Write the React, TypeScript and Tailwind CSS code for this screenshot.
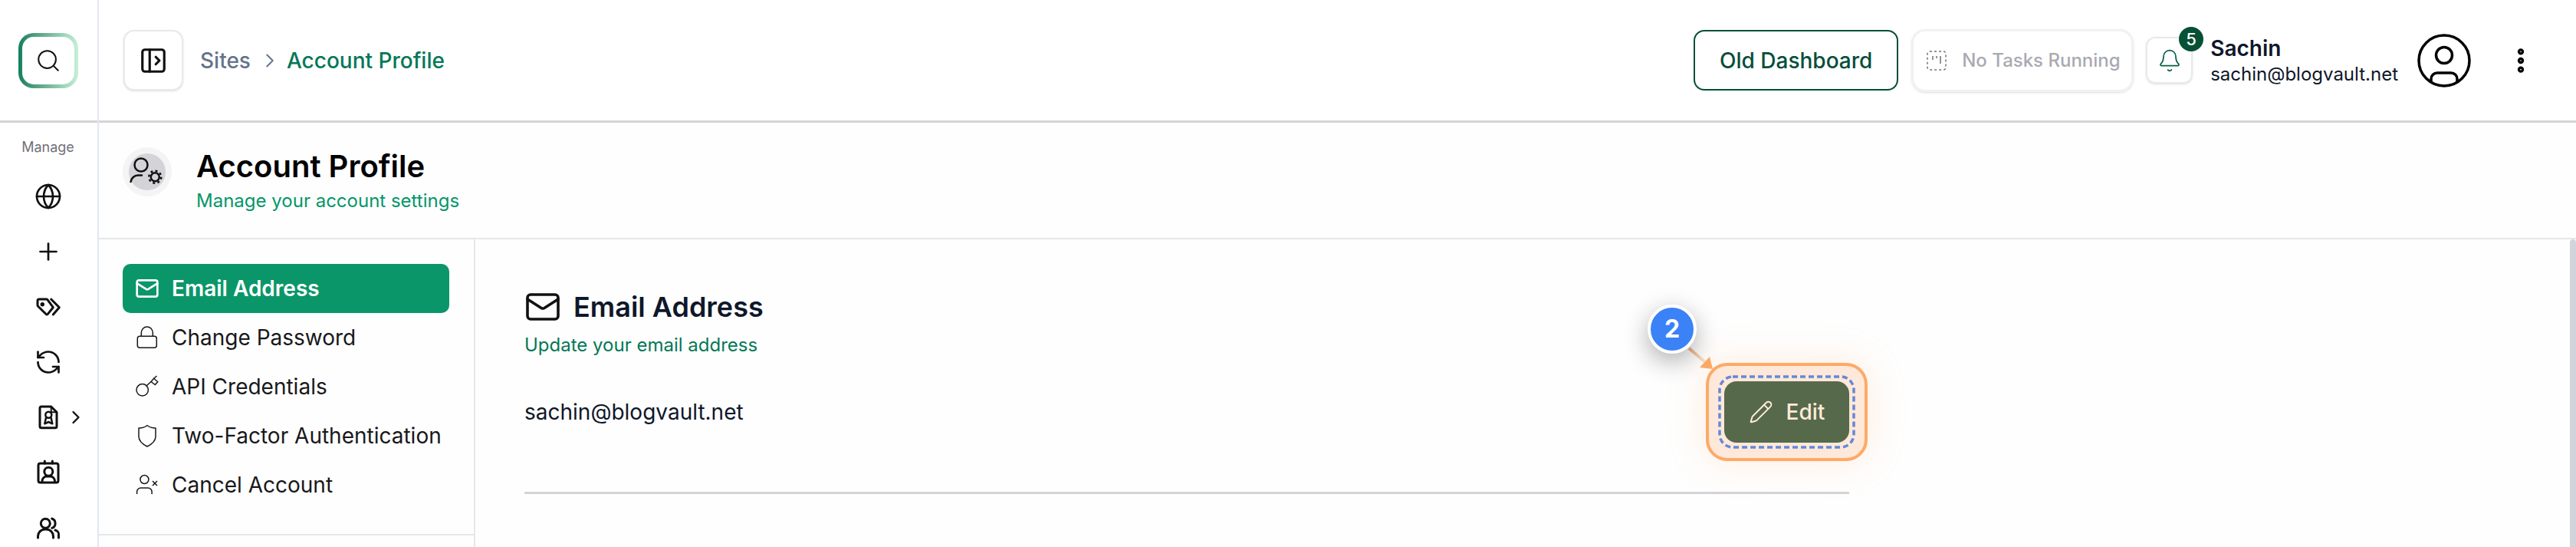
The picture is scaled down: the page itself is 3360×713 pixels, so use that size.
import React from 'react';
import {
  Search,
  PanelLeftOpen,
  ChevronRight,
  Globe,
  Plus,
  RefreshCcw,
  Bell,
  Pencil,
  Mail,
  MoreVertical,
} from 'lucide-react';

const font = { fontFamily: 'Inter, "Liberation Sans", sans-serif' };

type IconProps = { size?: number; strokeWidth?: number };

const LockIcon = ({ size = 32, strokeWidth = 1.5 }: IconProps) => (
  <svg width={size} height={size} viewBox="0 0 32 32" fill="none" stroke="currentColor" strokeWidth={strokeWidth}>
    <rect x="3.300" y="14.300" width="25" height="15" rx="3" />
    <path d="M8.300 14.300V9.500a7.500 7.500 0 0 1 15 0v4.800" />
  </svg>
);

const KeyIcon = ({ size = 32, strokeWidth = 1.5 }: IconProps) => (
  <svg width={size} height={size} viewBox="0 0 32 32" fill="none" stroke="currentColor" strokeWidth={strokeWidth}>
    <circle cx="9.700" cy="20.300" r="7.700" />
    <path d="M15.200 14.800 21 9.500" />
    <path d="M21 9.500 24.700 5.300 29.700 9.700 26.300 13.500z" />
    <path d="M24.700 5.300 28.500 2" />
  </svg>
);

const ShieldIcon = ({ size = 32, strokeWidth = 1.5 }: IconProps) => (
  <svg width={size} height={size} viewBox="0 0 32 32" fill="none" stroke="currentColor" strokeWidth={strokeWidth} strokeLinejoin="round">
    <path d="M16 2.500C13 5 9 6 5 6v11c0 6 5 10 11 13 6-3 11-7 11-13V6c-4 0-8-1-11-3.500z" />
  </svg>
);

const UserXIcon = ({ size = 32, strokeWidth = 1.5 }: IconProps) => (
  <svg width={size} height={size} viewBox="0 0 32 32" fill="none" stroke="currentColor" strokeWidth={strokeWidth}>
    <circle cx="12.400" cy="9" r="5.500" />
    <path d="M2.600 28v-3a5 5 0 0 1 5-5h9.500a5 5 0 0 1 5 5v3" />
    <path d="m23 11 6 6M29 11l-6 6" />
  </svg>
);

const navItems = [
  { label: 'Email Address', icon: Mail, active: true },
  { label: 'Change Password', icon: LockIcon },
  { label: 'API Credentials', icon: KeyIcon },
  { label: 'Two-Factor Authentication', icon: ShieldIcon },
  { label: 'Cancel Account', icon: UserXIcon },
];

const TagsIcon = () => (
  <svg width="36" height="36" viewBox="0 0 36 36" fill="none" stroke="#111" strokeWidth="3" strokeLinejoin="round" strokeLinecap="round">
    <path d="M4 10a2 2 0 0 1 2-2h9.500a2 2 0 0 1 1.600.8l7.200 9.900-7 8.700a1.500 1.500 0 0 1-2.200.1L4.600 17.200a2 2 0 0 1-.6-1.400z" />
    <circle cx="10.300" cy="14.700" r="1.200" fill="#111" />
    <path d="m21.700 8 10.600 10.700L24.300 28" />
  </svg>
);

const DocBadgeIcon = () => (
  <svg width="36" height="36" viewBox="0 0 36 36" fill="none" stroke="#111" strokeWidth="3" strokeLinejoin="round" strokeLinecap="round">
    <path d="M7 6a2 2 0 0 1 2-2h12.700L29 11.300V29.700a2 2 0 0 1-2 2H9a2 2 0 0 1-2-2z" />
    <path d="M21.700 4v7.300H29" strokeWidth="2" />
    <circle cx="18.300" cy="14.700" r="4" strokeWidth="2.500" />
    <path d="M15 18.500l-1.700 7.800 5-2.300 5 2.300-1.700-7.800" strokeWidth="2.500" />
  </svg>
);

const ContactIcon = () => (
  <svg width="36" height="36" viewBox="0 0 36 36" fill="none" stroke="#111" strokeWidth="3" strokeLinejoin="round" strokeLinecap="round">
    <rect x="5" y="6" width="26" height="25" rx="2.500" />
    <path d="M13.300 3v3M23.300 3v3" />
    <circle cx="18.300" cy="16.700" r="5.500" />
    <path d="M10 30v-1a6 6 0 0 1 6-6h4.500a6 6 0 0 1 6 6v1" />
  </svg>
);

const UsersIcon = () => (
  <svg width="36" height="36" viewBox="0 0 36 36" fill="none" stroke="#111" strokeWidth="3" strokeLinecap="round">
    <circle cx="14.300" cy="12.300" r="6" />
    <path d="M22.700 6a6.500 6.500 0 0 1 0 12.300" />
    <path d="M4.500 31v-2a9 9 0 0 1 9-9h2a9 9 0 0 1 9 9v2" />
    <path d="M27 21a6 6 0 0 1 4.500 7v3" />
  </svg>
);

const UserGearIcon = () => (
  <svg width="48" height="48" viewBox="0 0 48 48" fill="none" stroke="#111" strokeWidth="2.500" strokeLinecap="round">
    <circle cx="16" cy="15" r="8.500" />
    <path d="M2.500 37a10 10 0 0 1 9.500-8.500h5" />
    <circle cx="34.300" cy="30.700" r="5.500" />
    <circle cx="34.300" cy="30.700" r="8" strokeLinecap="butt" strokeDasharray="3 3.280" />
  </svg>
);

const TasksIcon = () => (
  <svg width="26" height="26" viewBox="0 0 26 26" fill="none" stroke="#71717a">
    <rect x="1" y="1" width="24" height="24" rx="3" strokeWidth="1.500" strokeDasharray="3 3" />
    <path d="M8 7v5M13 7v3M18 7v10" strokeWidth="1.500" />
  </svg>
);

const AvatarIcon = () => (
  <svg width="70" height="70" viewBox="0 0 70 70" fill="none" stroke="#000" strokeWidth="3.500">
    <circle cx="35" cy="35" r="33" />
    <circle cx="35" cy="28" r="10.500" />
    <path d="M18 62v-3a8 8 0 0 1 8-8h18a8 8 0 0 1 8 8v3" />
  </svg>
);

const Sidebar = () => (
  <aside className="flex w-[129px] shrink-0 flex-col border-r-2 border-[#e2e8f0] bg-white">
    <div className="flex h-[160px] shrink-0 items-start border-b-[3px] border-[#d4d4d8] pl-[24px] pt-[43px]">
      <div className="h-[72px] w-[78px] rounded-[20px] bg-gradient-to-r from-[#0f7f5f] to-[#c6f0d8] p-[5px]">
        <div className="flex h-full w-full items-center justify-center rounded-[15px] bg-white">
          <Search size={34} strokeWidth={1.400} color="#111" />
        </div>
      </div>
    </div>
    <div className="flex flex-col items-center pr-[2px] pt-[20px]">
      <span className="text-[18px] leading-6 text-[#71717a]">Manage</span>
      <div className="mt-[34px] flex h-[36px] items-center"><Globe size={36} strokeWidth={1.800} color="#111" /></div>
      <div className="mt-[36px] flex h-[36px] items-center"><Plus size={36} strokeWidth={1.800} color="#111" /></div>
      <div className="mt-[36px] flex h-[36px] items-center"><TagsIcon /></div>
      <div className="mt-[36px] flex h-[36px] items-center"><RefreshCcw size={36} strokeWidth={1.800} color="#111" /></div>
      <div className="relative mt-[36px] flex h-[36px] items-center">
        <DocBadgeIcon />
        <ChevronRight size={28} strokeWidth={2} color="#111" className="absolute left-[40px] top-[4px]" />
      </div>
      <div className="mt-[36px] flex h-[36px] items-center"><ContactIcon /></div>
      <div className="mt-[36px] flex h-[36px] items-center"><UsersIcon /></div>
    </div>
  </aside>
);

const Header = () => (
  <header className="flex h-[160px] shrink-0 items-center border-b-[3px] border-[#d4d4d8] bg-white pl-[32px] pr-[52px]">
    <button className="flex h-[79px] w-[78px] items-center justify-center rounded-[14px] border-2 border-[#e9e9eb] bg-white shadow-sm">
      <PanelLeftOpen size={38} strokeWidth={2} color="#111" />
    </button>
    <span className="ml-[22px] text-[28px] font-medium text-[#64748b]">Sites</span>
    <ChevronRight size={30} strokeWidth={1.500} color="#64748b" className="ml-[10px] mr-[7px]" />
    <span className="text-[28px] font-medium text-[#047857]">Account Profile</span>

    <div className="ml-auto flex items-center">
      <button className="flex h-[79px] w-[267px] items-center justify-center rounded-[14px] border-2 border-[#064e3b] text-[28px] font-medium text-[#064e3b]">
        Old Dashboard
      </button>
      <div className="ml-[17px] flex h-[82px] w-[290px] items-center gap-[20px] rounded-[18px] border-[3px] border-[#f1f1f3] pl-[17px] shadow-sm">
        <TasksIcon />
        <span className="text-[24px] font-medium text-[#a9aab2]">No Tasks Running</span>
      </div>
      <div className="relative ml-[16px] flex h-[61px] w-[61px] items-center justify-center rounded-[12px] border-2 border-[#e9e9eb] shadow-sm">
        <Bell size={32} strokeWidth={1.300} color="#065f46" />
        <span className="absolute left-[41px] top-[-15px] flex h-[32px] w-[32px] items-center justify-center rounded-full bg-[#065035] text-[22px] font-medium text-white">
          5
        </span>
      </div>
      <div className="ml-[23px] flex flex-col">
        <span className="text-[28px] font-semibold leading-[36px] text-[#0f172a]">Sachin</span>
        <span className="text-[24px] leading-[32px] text-[#0f172a]">sachin@blogvault.net</span>
      </div>
      <div className="ml-[25px]"><AvatarIcon /></div>
      <MoreVertical size={40} strokeWidth={3} color="#000" className="ml-[45px]" />
    </div>
  </header>
);

const EditButton = () => (
  <div className="relative">
    <div className="absolute -inset-6 rounded-[28px] border-4 border-[#fdaa66] bg-[#fde8da] shadow-[0_0_50px_rgba(253,170,102,0.22)]" />
    <svg className="absolute left-[-8px] top-[-8px]" width="179" height="96" fill="none">
      <rect x="2" y="2" width="175" height="92" rx="17" stroke="#6488d8" strokeWidth="3.500" strokeDasharray="7 4" />
    </svg>
    <button className="relative flex h-[80px] w-[163px] items-center justify-center gap-[17px] rounded-[16px] bg-[#57694b] text-[28px] font-medium text-[#fdebd9]">
      <Pencil size={32} strokeWidth={1.500} />
      Edit
    </button>
    <svg className="absolute left-[-49px] top-[-47px]" width="40" height="35" viewBox="0 0 40 35" fill="none">
      <defs>
        <linearGradient id="arrowLine" x1="3" y1="4" x2="24" y2="22" gradientUnits="userSpaceOnUse">
          <stop offset="0" stopColor="#eeb184" />
          <stop offset="1" stopColor="#fbe3d0" />
        </linearGradient>
      </defs>
      <path d="M3 4 24 22" stroke="url(#arrowLine)" strokeWidth="4" />
      <path d="M17 29 30 15l4 16z" fill="#fdaa66" />
    </svg>
    <span className="absolute left-[-100px] top-[-100px] flex h-[64px] w-[64px] items-center justify-center rounded-full border-4 border-white bg-[#3b82f6] text-[32px] font-bold text-white shadow-[0_10px_32px_rgba(0,0,0,0.32)]">
      2
    </span>
  </div>
);

export default function App() {
  return (
    <div className="flex h-[713px] w-[3360px] overflow-hidden bg-[#fefefe]" style={font}>
      <Sidebar />
      <div className="flex min-w-0 flex-1 flex-col">
        <Header />
        {/* Page title */}
        <div className="flex h-[152px] shrink-0 items-start border-b-2 border-[#e5e7eb] pl-[32px] pt-[32px]">
          <div className="mt-[8px] ml-[7px] flex h-[48px] w-[48px] items-center justify-center rounded-full bg-[#d4d4d8] ring-8 ring-[#f4f4f5]">
            <UserGearIcon />
          </div>
          <div className="ml-[40px] flex flex-col">
            <h1 className="text-[40px] font-semibold leading-[50px] text-black">Account Profile</h1>
            <p className="mt-[4px] text-[24px] leading-[32px] text-[#059669]">Manage your account settings</p>
          </div>
        </div>

        <div className="relative flex min-h-0 flex-1">
          <aside className="w-[491px] shrink-0 border-r-2 border-[#e5e7eb]">
            <nav className="flex flex-col border-b-2 border-[#e5e7eb] pb-[32px] pl-[31px] pr-[32px] pt-[32px]">
              {navItems.map(({ label, icon: Icon, active }) => (
                <div
                  key={label}
                  className={
                    active
                      ? 'flex h-[64px] items-center gap-4 rounded-[10px] bg-[#0b9669] pl-[16px] text-[28px] font-semibold text-white'
                      : 'flex h-[64px] items-center gap-4 pl-[16px] text-[28px] text-[#18181b]'
                  }
                >
                  <Icon size={32} strokeWidth={active ? 2 : 1.5} />
                  {label}
                </div>
              ))}
            </nav>
          </aside>

          <main className="pl-[64px] pt-[64px]">
            <div className="w-[1728px]">
              <div className="flex h-[48px] items-center gap-4">
                <Mail size={48} strokeWidth={1.800} color="#111" />
                <h2 className="text-[36px] font-semibold text-[#0f172a]">Email Address</h2>
              </div>
              <p className="mt-[10px] text-[24px] leading-[32px] text-[#047857]">Update your email address</p>
              <div className="mt-[31px] flex items-center justify-between">
                <span className="text-[28px] leading-[40px] text-[#0f172a]">sachin@blogvault.net</span>
                <EditButton />
              </div>
              <div className="mt-[64px] h-[3px] bg-[#d4d4d8]" />
            </div>
          </main>

          {/* Scrollbar thumb */}
          <div className="absolute bottom-0 right-0 top-0 w-[8px] rounded-t-[4px] bg-[#d1d5db]" />
        </div>
      </div>
    </div>
  );
}
